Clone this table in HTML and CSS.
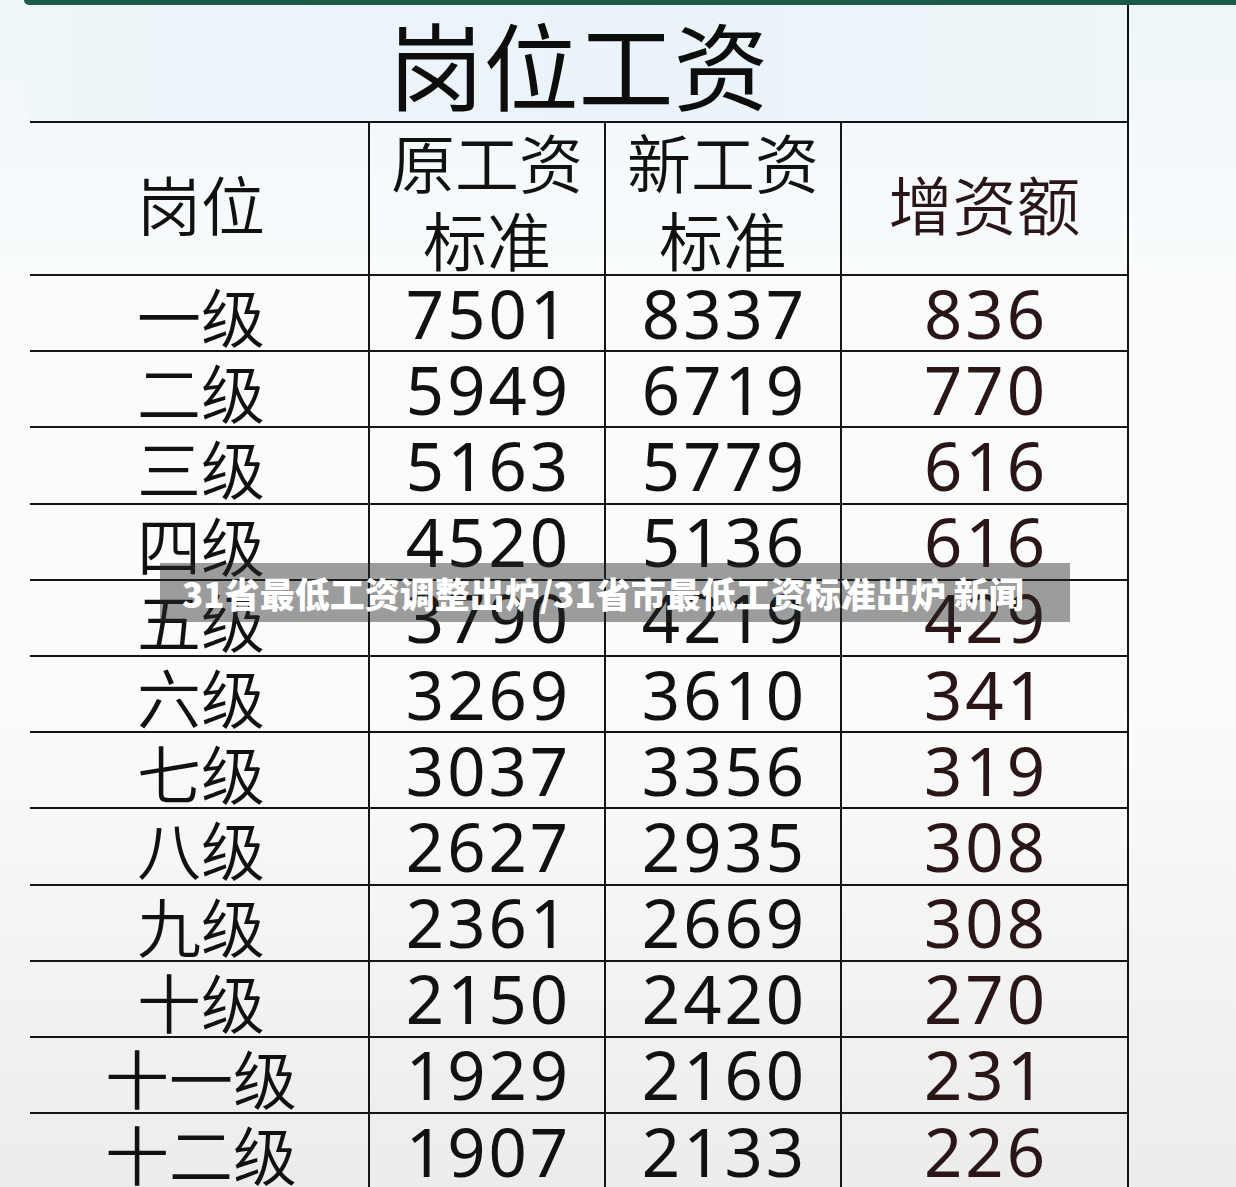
FILE: index.html
```html
<!DOCTYPE html>
<html lang="zh-CN">
<head>
<meta charset="utf-8">
<title>岗位工资</title>
<link rel="stylesheet" href="styles.css">
</head>
<body>
<div class="topbar"></div>
<div class="sheet">
  <div class="title">岗位工资</div>

  <div class="cell head c1 single">岗位</div>
  <div class="cell head c2">原工资<br>标准</div>
  <div class="cell head c3">新工资<br>标准</div>
  <div class="cell head c4 single">增资额</div>

  <div class="cell c1 cjk">一级</div><div class="cell c2 num">7501</div><div class="cell c3 num">8337</div><div class="cell c4 num">836</div>
  <div class="cell c1 cjk">二级</div><div class="cell c2 num">5949</div><div class="cell c3 num">6719</div><div class="cell c4 num">770</div>
  <div class="cell c1 cjk">三级</div><div class="cell c2 num">5163</div><div class="cell c3 num">5779</div><div class="cell c4 num">616</div>
  <div class="cell c1 cjk">四级</div><div class="cell c2 num">4520</div><div class="cell c3 num">5136</div><div class="cell c4 num">616</div>
  <div class="cell c1 cjk">五级</div><div class="cell c2 num">3790</div><div class="cell c3 num">4219</div><div class="cell c4 num">429</div>
  <div class="cell c1 cjk">六级</div><div class="cell c2 num">3269</div><div class="cell c3 num">3610</div><div class="cell c4 num">341</div>
  <div class="cell c1 cjk">七级</div><div class="cell c2 num">3037</div><div class="cell c3 num">3356</div><div class="cell c4 num">319</div>
  <div class="cell c1 cjk">八级</div><div class="cell c2 num">2627</div><div class="cell c3 num">2935</div><div class="cell c4 num">308</div>
  <div class="cell c1 cjk">九级</div><div class="cell c2 num">2361</div><div class="cell c3 num">2669</div><div class="cell c4 num">308</div>
  <div class="cell c1 cjk">十级</div><div class="cell c2 num">2150</div><div class="cell c3 num">2420</div><div class="cell c4 num">270</div>
  <div class="cell c1 cjk">十一级</div><div class="cell c2 num">1929</div><div class="cell c3 num">2160</div><div class="cell c4 num">231</div>
  <div class="cell c1 cjk">十二级</div><div class="cell c2 num">1907</div><div class="cell c3 num">2133</div><div class="cell c4 num">226</div>
</div>
<div class="banner">31省最低工资调整出炉/31省市最低工资标准出炉 新闻</div>
</body>
</html>
```

FILE: styles.css
```css
html, body {
  margin: 0;
  padding: 0;
}
body {
  width: 1236px;
  height: 1187px;
  overflow: hidden;
  position: relative;
  font-family: "Noto Sans CJK SC", "Noto Sans", sans-serif;
  color: #111;
  background: linear-gradient(to bottom, #eef6f9 0, #f9fbfc 280px, #fbfbfb 700px, #ececec 1187px);
}
.topbar {
  margin-left: 24px;
  height: 5px;
  background: #1c5b48;
  border-bottom-left-radius: 8px;
}
.sheet {
  margin-left: 30px;
  width: 1099px;
  display: grid;
  grid-template-columns: 338px 236px 236px 289px;
  grid-template-rows: 116px 153px repeat(12, 76.2px);
}
.title {
  grid-column: 1 / -1;
  box-sizing: border-box;
  border-right: 2px solid #111;
  background: linear-gradient(to right, #eef6fa, #eaf3f8 60%, #eef6f9);
  display: flex;
  align-items: center;
  justify-content: center;
  font-size: 95px;
  line-height: 1.1;
  color: #0d0d0d;
}
.cell {
  box-sizing: border-box;
  border-top: 2px solid #151515;
  display: flex;
  align-items: center;
  justify-content: center;
  text-align: center;
  white-space: nowrap;
}
.c1 {
  padding-left: 4px;
}
.c2, .c3, .c4 {
  border-left: 2px solid #151515;
}
.c4 {
  border-right: 2px solid #151515;
  color: #2a1517;
}
.head {
  font-size: 64px;
  line-height: 78px;
  font-weight: 350;
}
.head.single {
  padding-top: 6px;
}
.cjk {
  font-size: 64px;
  line-height: 1;
  font-weight: 350;
  padding-top: 2px;
}
.num {
  font-family: "Noto Sans", "Noto Sans CJK SC", sans-serif;
  font-size: 67px;
  font-weight: 400;
  line-height: 1;
  letter-spacing: 3px;
  padding-left: 3px;
}
.banner {
  position: absolute;
  left: 160px;
  top: 563px;
  width: 910px;
  height: 59px;
  box-sizing: border-box;
  padding-left: 22px;
  display: flex;
  align-items: center;
  background: rgba(40, 40, 40, 0.45);
  color: #fff;
  font-family: "Noto Sans CJK SC", sans-serif;
  font-weight: 900;
  font-size: 35px;
  line-height: 1;
  white-space: nowrap;
}
```
